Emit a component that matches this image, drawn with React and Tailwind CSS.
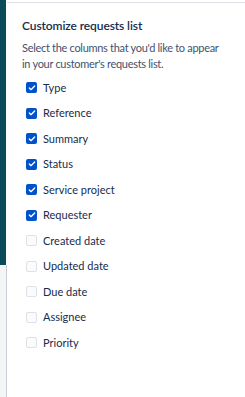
import { Check } from "lucide-react";

const columns = [
    { name: "Type", checked: true },
    { name: "Reference", checked: true },
    { name: "Summary", checked: true },
    { name: "Status", checked: true },
    { name: "Service project", checked: true },
    { name: "Requester", checked: true },
    { name: "Created date", checked: false },
    { name: "Updated date", checked: false },
    { name: "Due date", checked: false },
    { name: "Assignee", checked: false },
    { name: "Priority", checked: false },
];

export default function App() {
    return (
        <div className="flex h-[397px] w-[245px] bg-white font-['Lato',sans-serif]">
            {/* Sidebar edge */}
            <div className="flex w-[7px] flex-col">
                <div className="h-[265px] w-[6px] bg-[#0b4a59]"></div>
                <div className="flex-1 border-r border-[#c9ced6] bg-[#f4f5f7]"></div>
            </div>

            {/* Panel */}
            <div className="mt-[2px] flex-1 border-t border-[#dfe1e6] pl-[15px] pt-[13px]">
                <h2 className="text-[12px] font-semibold leading-5 tracking-[-0.1px] text-[#172b4d]">Customize requests list</h2>
                <p className="mt-[4px] w-[203px] text-[11px] leading-4 tracking-[-0.3px] text-[#42526e]">
                    Select the columns that you'd like to appear in your customer's requests list.
                </p>
                <ul className="mt-[3px]">
                    {columns.map((col) => (
                        <li key={col.name} className="flex h-[25.5px] items-center gap-[6px] pl-[4px]">
                            {col.checked ? (
                                <span className="flex h-[11px] w-[11px] items-center justify-center rounded-[2px] bg-[#0052cc]">
                                    <Check className="h-[8px] w-[8px] text-white" strokeWidth={4} />
                                </span>
                            ) : (
                                <span className="h-[11px] w-[11px] rounded-[2px] border border-[#dfe1e6] bg-[#fafbfc]"></span>
                            )}
                            <span className="text-[11px] text-[#172b4d]">{col.name}</span>
                        </li>
                    ))}
                </ul>
            </div>
        </div>
    );
}
